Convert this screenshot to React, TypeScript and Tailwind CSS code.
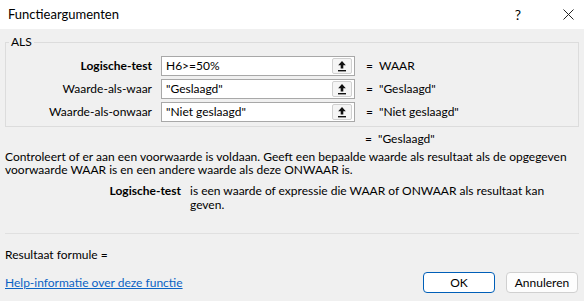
import React from "react";

const ROWS = [
  { label: "Logische-test", value: "H6>=50%", result: "WAAR", bold: true },
  { label: "Waarde-als-waar", value: "\"Geslaagd\"", result: "\"Geslaagd\"", bold: false },
  { label: "Waarde-als-onwaar", value: "\"Niet geslaagd\"", result: "\"Niet geslaagd\"", bold: false },
];

function RefIcon() {
  return (
    <svg width="10" height="12" viewBox="0 0 10 12" fill="none">
      <path d="M5 1 L1.2 5.2 H3.7 V8.6 H6.3 V5.2 H8.8 Z" fill="#111" />
      <rect x="1" y="10" width="8" height="1.4" fill="#111" />
    </svg>
  );
}

export default function App() {
  return (
    <div className="w-[584px] h-[301px] bg-[#f0f0f0] text-[12px] text-black overflow-hidden font-['Lato',sans-serif]">
      {/* Title bar */}
      <div className="h-[29px] bg-white flex items-center justify-between pl-[8px] pr-[10px]">
        <span className="text-[13px]">Functieargumenten</span>
        <div className="flex items-center gap-[42px]">
          <span className="text-[14px]">?</span>
          <svg width="11" height="11" viewBox="0 0 11 11">
            <path d="M0.5 0.5 L10.5 10.5 M10.5 0.5 L0.5 10.5" stroke="#222" strokeWidth="1" />
          </svg>
        </div>
      </div>

      <div className="px-[5px]">
        {/* Group box */}
        <fieldset className="border border-[#dcdcdc] w-[574px] pb-[4px] mt-[5px]">
          <legend className="ml-[3px] px-[2px] leading-[16px]">ALS</legend>
          <div className="flex flex-col gap-[3px] pt-[6px]">
            {ROWS.map((r) => (
              <div key={r.label} className="flex items-center h-[20px]">
                <div className={`w-[146px] text-right ${r.bold ? "font-bold" : ""}`}>{r.label}</div>
                <div className="ml-[9px] w-[194px] h-[20px] bg-white border border-[#a8a8a8] flex items-center justify-between pl-[4px] pr-[2px]">
                  <span>{r.value}</span>
                  <span className="w-[20px] h-[16px] bg-[#f5f5f5] border border-[#d0d0d0] rounded-[2px] flex items-center justify-center">
                    <RefIcon />
                  </span>
                </div>
                <span className="ml-[11px]">=</span>
                <span className="ml-[6px]">{r.result}</span>
              </div>
            ))}
          </div>
        </fieldset>

        <div className="flex h-[16px] items-center mt-[4px]">
          <span className="ml-[360px]">=</span>
          <span className="ml-[6px]">"Geslaagd"</span>
        </div>

        <p className="leading-[13px] mt-[3px] w-[574px]">
          Controleert of er aan een voorwaarde is voldaan. Geeft een bepaalde waarde als resultaat als de opgegeven
          voorwaarde WAAR is en een andere waarde als deze ONWAAR is.
        </p>

        <div className="flex mt-[8px] leading-[14px]">
          <div className="w-[176px] text-right font-bold">Logische-test</div>
          <div className="ml-[9px] w-[380px]">is een waarde of expressie die WAAR of ONWAAR als resultaat kan geven.</div>
        </div>

        <div className="mt-[21px] border-t border-[#e0e0e0] w-[574px]" />

        <div className="mt-[14px] leading-[14px]">Resultaat formule =</div>

        <div className="flex items-center justify-between mt-[10px] pr-[1px]">
          <a href="#" className="text-[#0b63c4] underline">Help-informatie over deze functie</a>
          <div className="flex gap-[11px]">
            <button className="w-[72px] h-[21px] bg-white border border-[#005fb8] rounded-[4px]">OK</button>
            <button className="w-[72px] h-[21px] bg-[#fdfdfd] border border-[#d0d0d0] rounded-[4px]">Annuleren</button>
          </div>
        </div>
      </div>
    </div>
  );
}
